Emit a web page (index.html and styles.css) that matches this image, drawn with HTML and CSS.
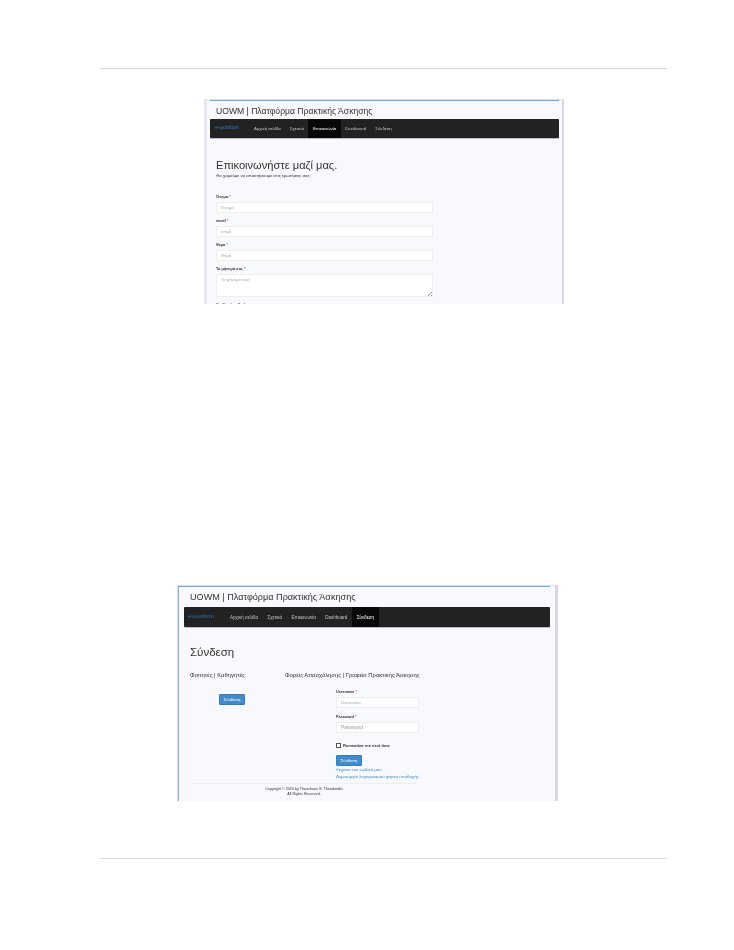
FILE: index.html
```html
<!DOCTYPE html>
<html lang="el">
<head>
  <meta charset="UTF-8">
  <title>e-position</title>
  <link rel="stylesheet" href="styles.css">
</head>
<body>
  <div class="page">
    <div class="rule"></div>

    <!-- contact form screenshot -->
    <div class="shot shot-contact">
      <div class="shot-inner">
        <div class="site-title">UOWM | Πλατφόρμα Πρακτικής Άσκησης</div>
        <div class="navbar">
          <span class="brand">e-position</span>
          <span class="nav-item">Αρχική σελίδα</span>
          <span class="nav-item">Σχετικά</span>
          <span class="nav-item active">Επικοινωνία</span>
          <span class="nav-item">Dashboard</span>
          <span class="nav-item">Σύνδεση</span>
        </div>
        <div class="content">
          <h1 class="heading">Επικοινωνήστε μαζί μας.</h1>
          <p class="lead">Θα χαρούμε να απαντήσουμε στις ερωτήσεις σας.</p>
          <form class="contact-form">
            <label class="label">Όνομα <em>*</em></label>
            <div class="input">Όνομα</div>
            <label class="label">email <em>*</em></label>
            <div class="input">email</div>
            <label class="label">Θέμα <em>*</em></label>
            <div class="input">Θέμα</div>
            <label class="label">Το μήνυμά σας <em>*</em></label>
            <div class="input textarea">Το μήνυμά σας</div>
            <label class="label">Verification Code</label>
          </form>
        </div>
      </div>
    </div>

    <!-- login screenshot -->
    <div class="shot shot-login">
      <div class="shot-inner">
        <div class="site-title">UOWM | Πλατφόρμα Πρακτικής Άσκησης</div>
        <div class="navbar">
          <span class="brand">e-position</span>
          <span class="nav-item">Αρχική σελίδα</span>
          <span class="nav-item">Σχετικά</span>
          <span class="nav-item">Επικοινωνία</span>
          <span class="nav-item">Dashboard</span>
          <span class="nav-item active">Σύνδεση</span>
        </div>
        <div class="content">
          <h1 class="heading">Σύνδεση</h1>
          <div class="login-cols">
            <div class="col-left">
              <div class="col-title">Φοιτητές | Καθηγητές</div>
              <span class="btn btn-sso">Σύνδεση</span>
            </div>
            <div class="col-right">
              <div class="col-title">Φορείς Απασχόλησης | Γραφεία Πρακτικής Άσκησης</div>
              <div class="login-form">
                <label class="label">Username <em>*</em></label>
                <div class="input">Username</div>
                <label class="label">Password <em>*</em></label>
                <div class="input pw">Password</div>
                <div class="remember"><span class="check"></span>Remember me next time</div>
                <span class="btn">Σύνδεση</span>
                <a class="link">Ξέχασα τον κωδικό μου</a>
                <a class="link">Δημιουργία λογαριασμού φορέα υποδοχής</a>
              </div>
            </div>
          </div>
          <div class="copyright">Copyright © 2020 by Theocharis S. Theodoridis<br>All Rights Reserved.</div>
        </div>
      </div>
    </div>

    <div class="rule rule-bottom"></div>
  </div>
</body>
</html>
```

FILE: styles.css
```css
* {
  box-sizing: border-box;
}

body {
  margin: 0;
  background: #ffffff;
  font-family: "Liberation Sans", Arial, sans-serif;
  color: #333333;
}

.page {
  width: 734px;
  height: 950px;
  padding: 68px 67px 0 100px;
}

.rule {
  height: 1px;
  background: #d8d8d8;
}

.rule-bottom {
  margin-top: 57px;
}

/* screenshots */
.shot {
  overflow: hidden;
  background: #f7f9fc;
  border-top: 1px solid #dfe3e8;
}

.shot-contact {
  width: 360px;
  height: 205px;
  margin: 30px 0 0 104px;
  border-left: 3px solid #e4e7eb;
  border-right: 2px solid #d5dae0;
}

.shot-login {
  width: 380px;
  height: 216px;
  margin: 281px 0 0 78px;
  border-left: 1px solid #7fb0dc;
  border-right: 3px solid #d5d9df;
  box-shadow: -1px 0 0 #dfe3e8;
}

.shot-inner {
  border-top: 1px solid #6fa8dc;
  filter: blur(0.35px);
}

.shot-contact .shot-inner {
  margin: 0 3px 0 3px;
}

.shot-login .shot-inner {
  margin: 0 5px 0 0;
}

.site-title {
  height: 18px;
  padding: 4px 0 0 6px;
  font-size: 8.6px;
  line-height: 12px;
  color: #333333;
}

.shot-login .site-title {
  height: 20px;
  padding-left: 11px;
  font-size: 9.1px;
}

.navbar {
  display: flex;
  align-items: stretch;
  height: 19px;
  padding-left: 5px;
  background: #222222;
  border-radius: 1px;
  box-shadow: 0 1px 0 #b8bcc0;
}

.shot-login .navbar {
  height: 20px;
  margin-left: 5px;
  padding-left: 4px;
}

.brand {
  width: 34.5px;
  padding-top: 4px;
  font-size: 5.5px;
  line-height: 8px;
  color: #2f7fc4;
}

.shot-login .brand {
  width: 37.3px;
  padding-top: 5px;
  font-size: 6px;
  color: #2a6ea8;
}

.nav-item {
  padding: 6px 4.5px 0;
  font-size: 4.3px;
  line-height: 8px;
  color: #c4c4c4;
}

.shot-login .nav-item {
  padding: 6.5px 4.7px 0;
  font-size: 4.5px;
}

.nav-item.active {
  background: #080808;
  color: #ffffff;
}

.content {
  padding: 0 6px;
}

.shot-login .content {
  padding: 0 11px;
}

.heading {
  margin: 0;
  padding-top: 19px;
  font-size: 11.1px;
  line-height: 16px;
  font-weight: 400;
  color: #333333;
}

.shot-login .heading {
  padding-top: 17px;
  font-size: 11.5px;
}

.lead {
  margin: 0;
  font-size: 4.3px;
  line-height: 5px;
  color: #333333;
}

/* forms */
.contact-form {
  width: 217px;
  padding-top: 17px;
}

.label {
  display: block;
  height: 7px;
  font-size: 3.8px;
  line-height: 5px;
  font-weight: 700;
  color: #333333;
}

.label em {
  font-style: normal;
  color: #d9534f;
}

.input {
  height: 11px;
  margin-bottom: 6px;
  padding-left: 4px;
  background: #ffffff;
  border: 1px solid #eceef0;
  font-size: 4.3px;
  line-height: 9px;
  color: #aaaaaa;
}

.textarea {
  position: relative;
  height: 23px;
  margin-bottom: 6px;
}

/* resize grip */
.textarea::after {
  content: '';
  position: absolute;
  right: 0;
  bottom: 0;
  width: 4px;
  height: 4px;
  background: linear-gradient(135deg, transparent 50%, #9a9a9a 50%, #9a9a9a 62%, transparent 62%, transparent 78%, #9a9a9a 78%);
}

.login-cols {
  display: flex;
  padding-top: 12px;
}

.col-left {
  width: 95px;
  flex: none;
}

.col-right {
  flex: none;
  width: 135px;
}

.col-title {
  height: 18px;
  font-size: 5.85px;
  line-height: 7px;
  white-space: nowrap;
  color: #333333;
}

.btn {
  display: block;
  width: 26px;
  height: 11px;
  background: #428bca;
  border: 1px solid #357ebd;
  border-radius: 1px;
  font-size: 4.4px;
  line-height: 9px;
  text-align: center;
  color: #ffffff;
}

.btn-sso {
  margin: 4px 0 0 29px;
}

.login-form {
  width: 83px;
  margin-left: 51px;
}

.login-form .input {
  margin-bottom: 7px;
}

.login-form .pw {
  margin-bottom: 0;
  font-size: 5px;
  color: #999999;
}

.remember {
  display: flex;
  align-items: center;
  height: 5px;
  margin: 10px 0 7px;
  font-size: 4.05px;
  font-weight: 700;
  white-space: nowrap;
}

.check {
  width: 5px;
  height: 5px;
  margin-right: 2px;
  border: 1px solid #555555;
  background: #ffffff;
}

.link {
  display: block;
  height: 6px;
  margin-top: 1px;
  font-size: 4.4px;
  line-height: 6px;
  white-space: nowrap;
  color: #428bca;
}

.copyright {
  width: 228px;
  margin-top: 3px;
  padding-top: 3px;
  border-top: 1px solid #eceef0;
  font-size: 3.7px;
  line-height: 5px;
  text-align: center;
  color: #333333;
}
```
